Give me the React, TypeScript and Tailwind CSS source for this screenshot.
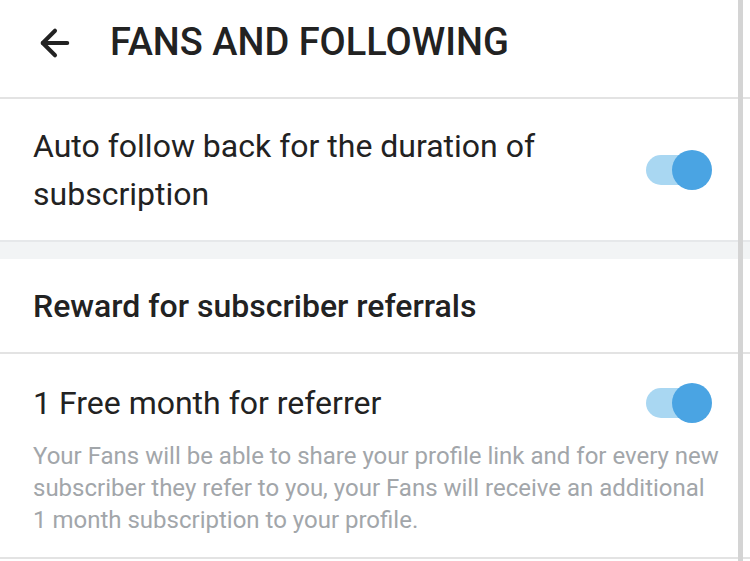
import { ArrowLeft } from 'lucide-react';

const Toggle = () => (
  <div className="relative w-[66px] h-[42px] shrink-0">
    <div className="absolute left-0 top-[6px] w-[56px] h-[30px] rounded-full bg-[#a9d7f2]"></div>
    <div className="absolute right-0 top-[1px] w-[40px] h-[40px] rounded-full bg-[#4aa4e3]"></div>
  </div>
);

const App = () => {
  return (
    <div className="relative w-[750px] h-[561px] overflow-hidden bg-white text-[#222] font-['Roboto',sans-serif]">
      {/* Header */}
      <div className="flex items-center h-[99px] pb-[12px] pl-[34px] gap-[34px] border-b-2 border-[#e3e3e3]">
        <ArrowLeft className="w-[42px] h-[42px] text-[#222]" strokeWidth={2.3} />
        <h1 className="text-[38px] font-medium">FANS AND FOLLOWING</h1>
      </div>

      {/* Auto follow */}
      <div className="flex items-center justify-between pl-[33px] pr-[38px] h-[143px] border-b-2 border-[#e6e8ea]">
        <p className="text-[32px] leading-[48px] w-[560px]">
          Auto follow back for the duration of subscription
        </p>
        <Toggle />
      </div>

      <div className="h-[17px] bg-[#f2f4f5]"></div>

      {/* Section header */}
      <div className="flex items-center h-[95px] pl-[33px] border-b-2 border-[#e3e3e3]">
        <h2 className="text-[32px] font-medium">Reward for subscriber referrals</h2>
      </div>

      {/* Referral */}
      <div className="pl-[33px] pr-[38px] pt-[25px] pb-[21px] border-b-2 border-[#e3e3e3]">
        <div className="flex items-center justify-between">
          <span className="text-[32px]">1 Free month for referrer</span>
          <Toggle />
        </div>
        <p className="text-[24px] leading-[32px] text-[#a2a6aa] mt-[13px] w-[690px]">
          Your Fans will be able to share your profile link and for every new subscriber they refer to you, your Fans will receive an additional 1 month subscription to your profile.
        </p>
      </div>

      {/* Scrollbar */}
      <div className="absolute top-0 right-[7px] w-[5px] h-full bg-[#d4d4d4]"></div>
    </div>
  );
};

export default App;
